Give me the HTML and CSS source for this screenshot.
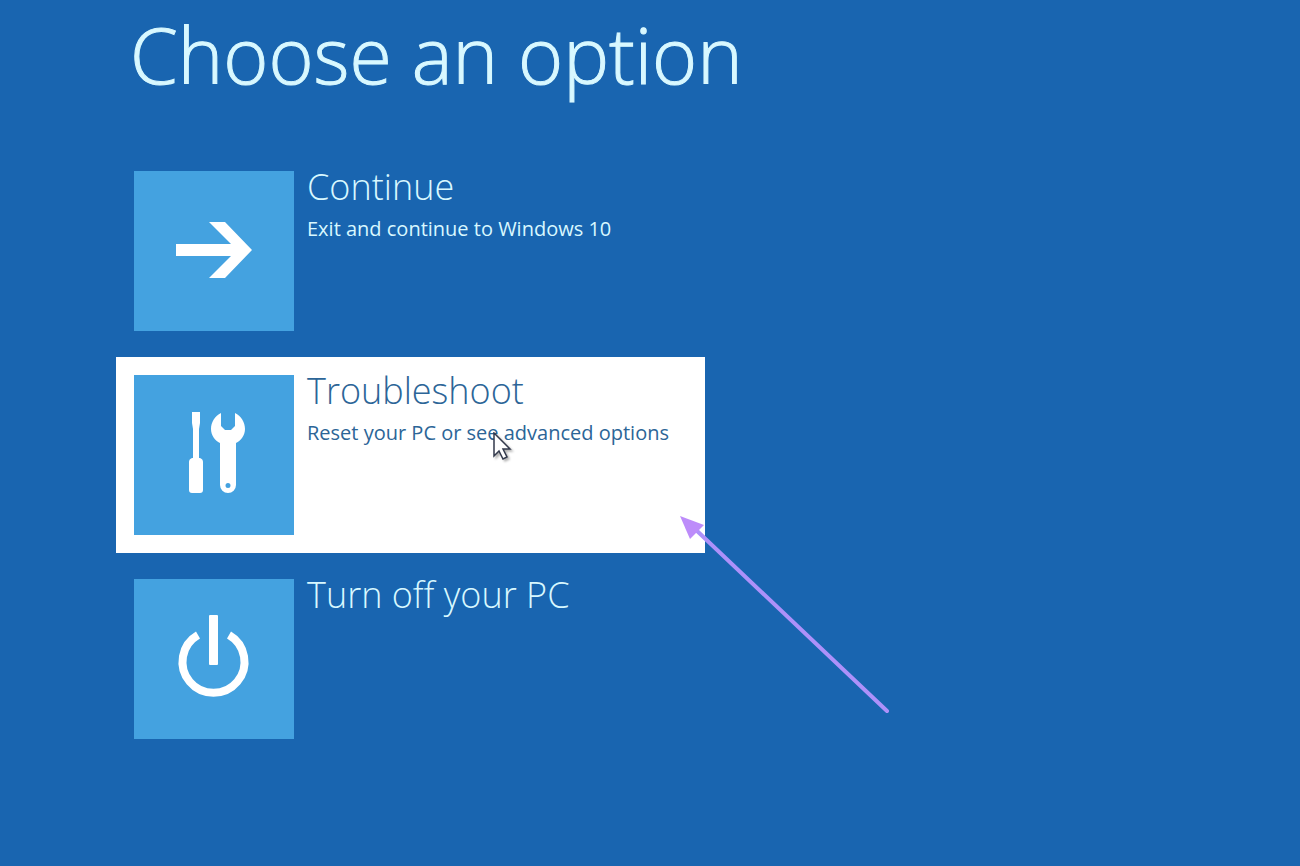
FILE: index.html
```html
<!DOCTYPE html>
<html lang="en">
<head>
  <meta charset="UTF-8">
  <meta name="viewport" content="width=device-width, initial-scale=1.0">
  <title>Choose an option</title>
  <link rel="stylesheet" href="styles.css">
</head>
<body>

<main class="screen">
  <h1 class="title">Choose an option</h1>

  <div class="options">
    <button class="option" type="button">
      <span class="tile">
        <svg viewBox="0 0 160 160" aria-hidden="true">
          <path d="M42 73H97L75 51H91L118 79L91 107H75L97 85H42Z"/>
        </svg>
      </span>
      <span class="text">
        <span class="name">Continue</span>
        <span class="desc">Exit and continue to Windows 10</span>
      </span>
    </button>

    <div class="current">
      <button class="option selected" type="button">
        <span class="tile">
          <svg viewBox="0 0 160 160" aria-hidden="true">
            <path d="M58 37H66V48L65 54V83H66Q69 84 69 87V115Q69 118 66 118H58Q55 118 55 115V87Q55 84 58 83H59V54L58 48Z"/>
            <path fill-rule="evenodd" d="M87 38V51L91 55H97L101 51V38C107 41 111 47 111 54C111 60 107 66 102 68V110A8 8 0 0 1 86 110V68C81 66 77 60 77 54C77 47 81 41 87 38ZM94 108A2 2 0 0 0 94 113A2 2 0 0 0 94 108Z"/>
          </svg>
        </span>
        <span class="text">
          <span class="name">Troubleshoot</span>
          <span class="desc">Reset your PC or see advanced options</span>
        </span>
      </button>

      <svg class="cursor" viewBox="0 0 20 30" aria-hidden="true">
        <path d="M1 1V24L6 19L10 27L14 25L10 17H17Z"/>
      </svg>
      <svg class="pointer" viewBox="0 0 212 200" aria-hidden="true">
        <path class="line" d="M15 14L207 196"/>
        <path class="head" d="M0 1L24 10L10 24Z"/>
      </svg>
    </div>

    <button class="option" type="button">
      <span class="tile">
        <svg viewBox="0 0 160 160" aria-hidden="true">
          <rect x="75" y="36" width="9" height="50" rx="1"/>
          <path class="ring" d="M64 56A31 31 0 1 0 95 56"/>
        </svg>
      </span>
      <span class="text">
        <span class="name">Turn off your PC</span>
      </span>
    </button>
  </div>
</main>

</body>
</html>
```

FILE: styles.css
```css
* {
  box-sizing: border-box;
}

body {
  margin: 0;
  min-height: 100vh;
  background: #1965b0;
  color: #d8f8ff;
  font-family: "Open Sans", "Noto Sans", sans-serif;
}

.screen {
  padding: 0 20px 40px 116px;
}

.title {
  margin: 0 0 43px;
  padding-left: 14px;
  font-size: 77px;
  font-weight: 300;
  line-height: 110px;
  -webkit-text-stroke: 1px #d8f8ff;
}

/* option list */
.options {
  display: flex;
  flex-direction: column;
  gap: 8px;
  max-width: 589px;
}

.option {
  display: flex;
  align-items: flex-start;
  gap: 13px;
  width: 100%;
  padding: 18px;
  border: none;
  background: none;
  color: inherit;
  font-family: inherit;
  text-align: left;
  cursor: pointer;
}

.selected {
  background: #fff;
  color: #2c6597;
}

.tile {
  flex: none;
  width: 160px;
  height: 160px;
  background: #44a2e0;
}

.tile svg {
  display: block;
  width: 100%;
  height: 100%;
  fill: #fff;
}

.tile .ring {
  fill: none;
  stroke: #fff;
  stroke-width: 8;
}

.text {
  display: flex;
  flex-direction: column;
  gap: 12px;
  white-space: nowrap;
}

.name {
  font-size: 36px;
  font-weight: 300;
  line-height: 32px;
}

.desc {
  font-size: 20px;
  line-height: 28px;
}

/* mouse cursor and arrow over the selected option */
.current {
  position: relative;
}

.cursor {
  position: absolute;
  left: 377px;
  top: 75px;
  width: 20px;
  height: 30px;
  fill: #fff;
  stroke: #333a4c;
  stroke-width: 1.5;
  filter: drop-shadow(2px 2px 1px rgba(0, 0, 0, 0.3));
  pointer-events: none;
}

.pointer {
  position: absolute;
  left: 564px;
  top: 158px;
  width: 212px;
  height: 200px;
  pointer-events: none;
}

.pointer .line {
  fill: none;
  stroke: #ad91fa;
  stroke-width: 4;
  stroke-linecap: round;
}

.pointer .head {
  fill: #bd8cfa;
}
```
